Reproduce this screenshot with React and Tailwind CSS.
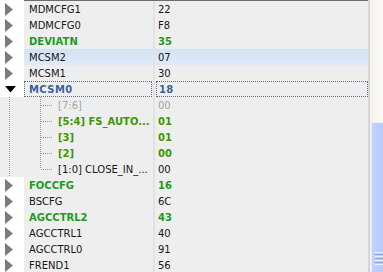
import React from 'react';

const rowsTop = [
    { name: 'MDMCFG1', value: '22', tone: 'plain' },
    { name: 'MDMCFG0', value: 'F8', tone: 'plain' },
    { name: 'DEVIATN', value: '35', tone: 'green' },
    { name: 'MCSM2', value: '07', tone: 'plain', selected: true },
    { name: 'MCSM1', value: '30', tone: 'plain' },
];

const children = [
    { name: '[7:6]', value: '00', tone: 'gray' },
    { name: '[5:4] FS_AUTO...', value: '01', tone: 'lime' },
    { name: '[3]', value: '01', tone: 'lime' },
    { name: '[2]', value: '00', tone: 'lime' },
    { name: '[1:0] CLOSE_IN_...', value: '00', tone: 'plain' },
];

const rowsBottom = [
    { name: 'FOCCFG', value: '16', tone: 'green' },
    { name: 'BSCFG', value: '6C', tone: 'plain' },
    { name: 'AGCCTRL2', value: '43', tone: 'green' },
    { name: 'AGCCTRL1', value: '40', tone: 'plain' },
    { name: 'AGCCTRL0', value: '91', tone: 'plain' },
    { name: 'FREND1', value: '56', tone: 'plain' },
];

const toneClass = {
    plain: 'text-[#161616]',
    green: 'text-[#1f9a1f] font-bold',
    lime: 'text-[#3f9800] font-bold',
    gray: 'text-[#a6a6a6]',
};

const Collapsed = () => (
    <svg width="24" height="16" className="block">
        <polygon points="5,2 13,8.5 5,15" fill="#7c7c7c" />
    </svg>
);

const Expanded = () => (
    <svg width="24" height="16" className="block">
        <polygon points="5,5 16,5 10.5,11.5" fill="#000" />
    </svg>
);

const Row = ({ row }) => (
    <div className="flex h-4">
        <div className="w-6 bg-white">
            <Collapsed />
        </div>
        <div
            className={`flex w-[344px] ${row.selected ? 'bg-gradient-to-b from-[#d3e3f3] to-[#dfeaf8]' : 'bg-[#eeeeee]'}`}
        >
            <div className={`w-[129px] pl-[5px] leading-[17px] ${toneClass[row.tone]}`}>{row.name}</div>
            <div className="w-[2px] bg-[#e2e2e2]" />
            <div className={`flex-1 pl-[3px] leading-[17px] ${toneClass[row.tone]}`}>{row.value}</div>
        </div>
    </div>
);

const Branch = ({ last }) => (
    <svg width="58" height="16" className="block shrink-0">
        <line x1="9.5" y1="0" x2="9.5" y2="16" stroke="#9a9a9a" strokeDasharray="1 1" />
        <line x1="40.5" y1="0" x2="40.5" y2={last ? 8 : 16} stroke="#9a9a9a" strokeDasharray="1 1" />
        <line x1="41" y1="8.5" x2="52" y2="8.5" stroke="#9a9a9a" strokeDasharray="1 1" />
    </svg>
);

const ChildRow = ({ row, last }) => (
    <div className="flex h-4 bg-[#eeeeee]">
        <Branch last={last} />
        <div className={`w-[95px] overflow-hidden whitespace-nowrap leading-[17px] ${toneClass[row.tone]}`}>{row.name}</div>
        <div className="w-[2px] bg-[#e2e2e2]" />
        <div className={`w-[213px] pl-[3px] leading-[17px] ${toneClass[row.tone]}`}>{row.value}</div>
    </div>
);

export default function App() {
    return (
        <div
            className="flex w-[383px] h-[272px] overflow-hidden bg-white text-[10px]"
            style={{ fontFamily: '"DejaVu Sans", Verdana, sans-serif' }}
        >
            <div className="w-[368px] flex flex-col">
                <div className="flex h-[2px]">
                    <div className="w-6 bg-white" />
                    <div className="flex-1 border-t border-[#6e6e6e] bg-[#eeeeee]" />
                </div>
                {rowsTop.map((r) => (
                    <Row key={r.name} row={r} />
                ))}
                <div className="flex h-4">
                    <div className="w-6 bg-white">
                        <Expanded />
                    </div>
                    <div className="flex w-[344px] bg-[#eeeeee] text-[#3f5f9f] font-bold tracking-[0.4px]">
                        <div className="w-[128px] pl-[4px] leading-[15px] border border-dotted border-[#5a6a80]">MCSM0</div>
                        <div className="w-[2px] bg-[#e2e2e2] mx-[1px]" />
                        <div className="flex-1 pl-[2px] leading-[15px] border border-dotted border-[#5a6a80]">18</div>
                    </div>
                </div>
                {children.map((r, i) => (
                    <ChildRow key={r.name} row={r} last={i === children.length - 1} />
                ))}
                {rowsBottom.map((r) => (
                    <Row key={r.name} row={r} />
                ))}
            </div>
            <div className="w-[2px] bg-[#d6d6d6]" />
            <div className="flex-1 flex flex-col bg-gradient-to-r from-[#f3f1ec] to-[#fbfaf8]">
                <div className="h-[122px]" />
                <div className="flex-1 ml-[1px] rounded-t-[2px] border-t border-l border-[#e4ebfd] bg-gradient-to-r from-[#c3d3fc] to-[#b6c9f9] flex flex-col items-center">
                    <div className="h-[129px]" />
                    <div className="flex flex-col gap-[1px] w-[8px] ml-[2px]">
                        <div className="h-[1px] bg-[#eef2fe]" />
                        <div className="h-[1px] bg-[#8ca6e6]" />
                        <div className="h-[1px] bg-[#eef2fe]" />
                        <div className="h-[1px] bg-[#8ca6e6]" />
                        <div className="h-[1px] bg-[#eef2fe]" />
                        <div className="h-[1px] bg-[#8ca6e6]" />
                        <div className="h-[1px] bg-[#eef2fe]" />
                    </div>
                </div>
            </div>
        </div>
    );
}
